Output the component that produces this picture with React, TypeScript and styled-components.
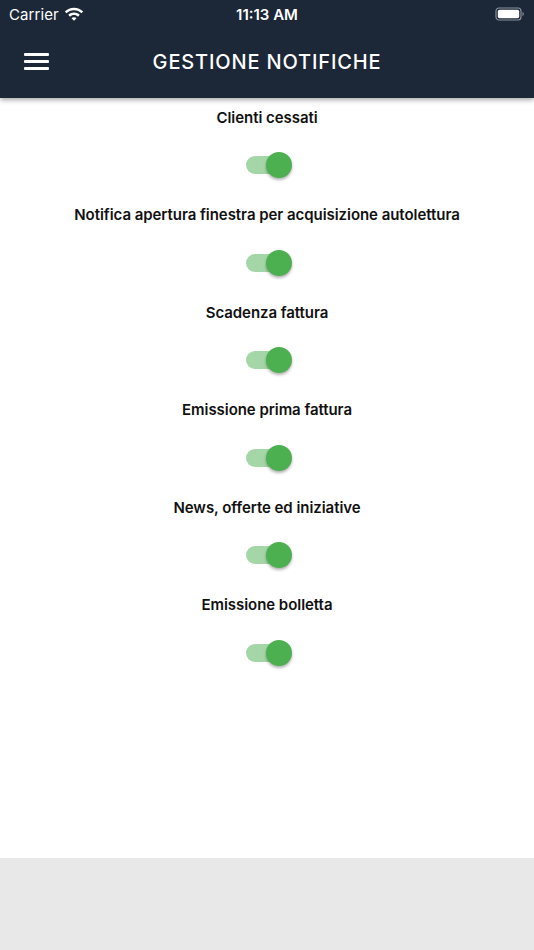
import { useState } from 'react';
import styled, { createGlobalStyle } from "styled-components";

const GlobalStyle = createGlobalStyle`
    html, body {
        margin: 0;
        padding: 0;
        background: #ffffff;
    }
    * {
        box-sizing: border-box;
    }
`;

const Screen = styled.div`
    display: flex;
    flex-direction: column;
    width: 534px;
    height: 950px;
    font-family: Inter, "Liberation Sans", sans-serif;
    overflow: hidden;
`;

const Header = styled.header`
    background-color: #1c2737;
    color: #ffffff;
    box-shadow: 0 2px 5px rgba(0, 0, 0, 0.35);
    position: relative;
    z-index: 2;
`;

const StatusBar = styled.div`
    height: 28px;
    display: grid;
    grid-template-columns: 1fr auto 1fr;
    align-items: center;
    padding: 0 9px;
    font-size: 15px;
`;

const Carrier = styled.div`
    display: flex;
    align-items: center;
    gap: 5px;
    letter-spacing: 0.1px;
`;

const Clock = styled.div`
    font-weight: 600;
`;

const BatteryWrap = styled.div`
    display: flex;
    justify-content: flex-end;
    align-items: center;
`;

const NavBar = styled.div`
    height: 70px;
    display: flex;
    align-items: center;
    position: relative;
    justify-content: center;
`;

const MenuButton = styled.button`
    position: absolute;
    left: 24px;
    top: 25px;
    width: 25px;
    height: 17px;
    padding: 0;
    border: none;
    background: transparent;
    display: flex;
    flex-direction: column;
    justify-content: space-between;
    cursor: pointer;
`;

const MenuLine = styled.span`
    display: block;
    height: 3px;
    width: 100%;
    background: #ffffff;
    border-radius: 1px;
`;

const Title = styled.h1`
    margin: 0 0 3px;
    font-size: 20px;
    font-weight: 500;
    letter-spacing: 0.85px;
`;

const Content = styled.main`
    flex: 1;
    background: #ffffff;
`;

const Item = styled.div`
    height: 97.6px;
    padding-top: 9.5px;
    display: flex;
    flex-direction: column;
    align-items: center;
`;

const Label = styled.div`
    font-size: 15px;
    line-height: 20px;
    font-weight: 600;
    color: #111111;
    text-align: center;
    letter-spacing: -0.05px;
`;

const ToggleRow = styled.div`
    margin-top: 19.5px;
    height: 36px;
    display: flex;
    align-items: center;
    justify-content: center;
`;

const Track = styled.button<{ $on: boolean }>`
    position: relative;
    width: 44px;
    height: 18px;
    border-radius: 9px;
    border: none;
    padding: 0;
    margin-left: 1px;
    cursor: pointer;
    background: ${(p) => (p.$on ? "#a5d6a7" : "#c8c8c8")};
`;

const Thumb = styled.span<{ $on: boolean }>`
    position: absolute;
    top: -4px;
    left: ${(p) => (p.$on ? "20px" : "-2px")};
    width: 26px;
    height: 26px;
    border-radius: 50%;
    background: ${(p) => (p.$on ? "#4caf50" : "#f5f5f5")};
    box-shadow: 0 2px 3px rgba(0, 0, 0, 0.3);
`;

const Footer = styled.footer`
    height: 92px;
    background: #e8e8e8;
`;

function WifiIcon() {
    return (
        <svg width="20" height="14" viewBox="0 0 18 13">
            <path d="M9 .8c3.3 0 6.3 1.3 8.5 3.4L15.9 5.9C14.1 4.2 11.7 3.1 9 3.1S3.9 4.2 2.1 5.9L.5 4.2C2.7 2.1 5.7.8 9 .8z" fill="#fff" />
            <path d="M9 5.2c2.1 0 3.9.8 5.3 2.1l-1.6 1.7C11.7 8.1 10.4 7.5 9 7.5s-2.7.6-3.7 1.5L3.7 7.3C5.1 6 6.9 5.2 9 5.2z" fill="#fff" />
            <path d="M9 9.5c.9 0 1.7.3 2.3.9L9 12.8 6.7 10.4c.6-.6 1.4-.9 2.3-.9z" fill="#fff" />
        </svg>
    );
}

function BatteryIcon() {
    return (
        <svg width="30" height="14" viewBox="0 0 30 14">
            <rect x="1" y="1" width="25" height="12" rx="3" fill="none" stroke="#8a929c" strokeWidth="1.2" />
            <rect x="2.8" y="2.8" width="21.4" height="8.4" rx="1.6" fill="#fff" />
            <path d="M27.5 5v4c.8-.3 1.3-1.1 1.3-2s-.5-1.7-1.3-2z" fill="#8a929c" />
        </svg>
    );
}

const notifications = [
    "Clienti cessati",
    "Notifica apertura finestra per acquisizione autolettura",
    "Scadenza fattura",
    "Emissione prima fattura",
    "News, offerte ed iniziative",
    "Emissione bolletta",
];

export default function App() {
    const [enabled, setEnabled] = useState<boolean[]>(notifications.map(() => true));

    function toggle(i: number) {
        setEnabled(enabled.map((v, j) => (j === i ? !v : v)));
    }

    return (
        <Screen>
            <GlobalStyle />
            <Header>
                <StatusBar>
                    <Carrier>
                        Carrier <WifiIcon />
                    </Carrier>
                    <Clock>11:13 AM</Clock>
                    <BatteryWrap>
                        <BatteryIcon />
                    </BatteryWrap>
                </StatusBar>
                <NavBar>
                    <MenuButton aria-label="menu">
                        <MenuLine />
                        <MenuLine />
                        <MenuLine />
                    </MenuButton>
                    <Title>GESTIONE NOTIFICHE</Title>
                </NavBar>
            </Header>
            <Content>
                {notifications.map((label, i) => (
                    <Item key={label}>
                        <Label>{label}</Label>
                        <ToggleRow>
                            <Track $on={enabled[i]} onClick={() => toggle(i)}>
                                <Thumb $on={enabled[i]} />
                            </Track>
                        </ToggleRow>
                    </Item>
                ))}
            </Content>
            <Footer />
        </Screen>
    );
}
